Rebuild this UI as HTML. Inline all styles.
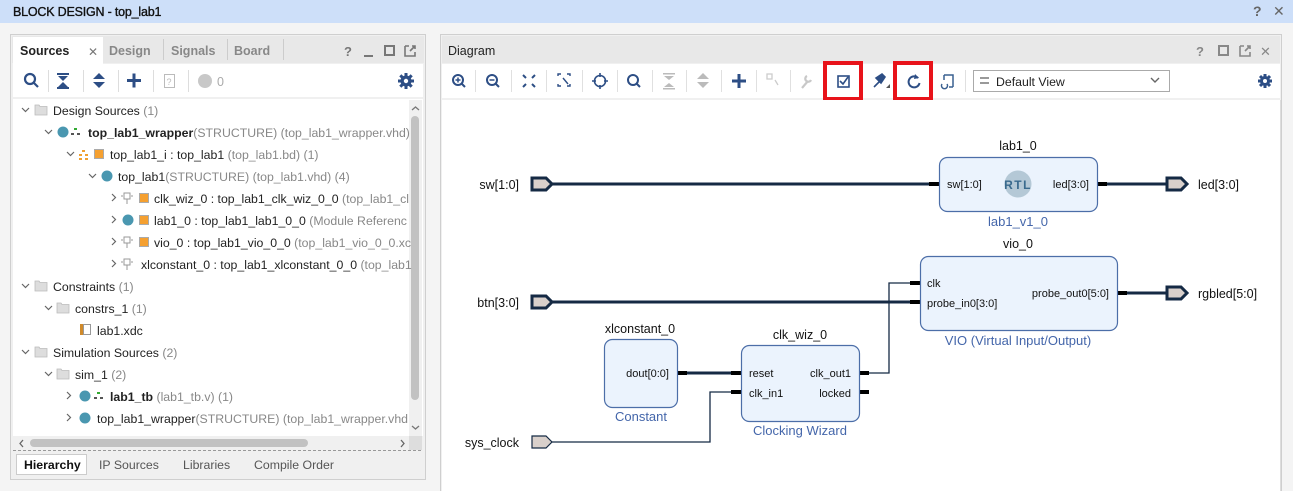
<!DOCTYPE html>
<html><head><meta charset="utf-8"><style>
html,body{margin:0;padding:0;background:#fff;}
svg{display:block;font-family:"Liberation Sans",Arial,sans-serif;}
</style></head><body>
<svg width="1293" height="491" viewBox="0 0 1293 491" xmlns="http://www.w3.org/2000/svg">
<rect x="0" y="0" width="1293" height="491" fill="#f4f4f4"/>
<!-- title bar -->
<rect x="0" y="0" width="1293" height="23" fill="#cddff9"/>
<text x="13" y="16" font-size="12.5" fill="#111" stroke="#111" stroke-width="0.35" letter-spacing="-0.2">BLOCK DESIGN - top_lab1</text>
<text x="1253" y="16" font-size="14" fill="#666" font-weight="bold">?</text>
<text x="1273" y="16" font-size="14" fill="#666">✕</text>

<!-- LEFT PANEL -->
<rect x="10.5" y="34.5" width="415" height="445" fill="#f0f0f0" stroke="#cfcfcf"/>
<rect x="12" y="36" width="412" height="27" fill="#e8e8e8"/>
<rect x="13" y="37" width="90" height="27" fill="#fff"/>
<text x="20" y="55" font-size="12.5" font-weight="bold" fill="#222">Sources</text>
<text x="88" y="56" font-size="12" fill="#777">✕</text>
<text x="109" y="55" font-size="12.5" font-weight="bold" fill="#888">Design</text>
<line x1="163.5" y1="39" x2="163.5" y2="60" stroke="#ccc"/>
<text x="171" y="55" font-size="12.5" font-weight="bold" fill="#888">Signals</text>
<line x1="227.5" y1="39" x2="227.5" y2="60" stroke="#ccc"/>
<text x="234" y="55" font-size="12.5" font-weight="bold" fill="#888">Board</text>
<line x1="283.5" y1="39" x2="283.5" y2="60" stroke="#ccc"/>
<text x="344" y="56" font-size="13" font-weight="bold" fill="#777">?</text>
<line x1="364" y1="56" x2="373" y2="56" stroke="#777" stroke-width="2"/>
<rect x="385" y="46" width="9" height="9" fill="none" stroke="#777" stroke-width="2"/>
<path d="M405 46h4M405 46v10h10v-4M410 51l5-5M412 46h3v3" fill="none" stroke="#777" stroke-width="1.6"/>
<!-- toolbar -->
<rect x="13" y="64" width="410" height="33" fill="#fff"/>
<g stroke="#2d4e85" fill="none" stroke-width="2.2">
<circle cx="30" cy="79" r="5"/><line x1="34" y1="83" x2="38" y2="87"/>
</g>
<g fill="#2d4e85">
<rect x="57" y="73" width="12" height="2"/><path d="M58 76h10l-5 5z"/><path d="M58 87h10l-5-5z"/><rect x="57" y="87" width="12" height="2"/>
<path d="M93 79h12l-6-6z"/><path d="M93 82h12l-6 6z"/>
<rect x="127" y="79" width="14" height="3"/><rect x="132.5" y="73.5" width="3" height="14"/>
<circle cx="205" cy="81" r="7" fill="#c8c8c8"/>
</g>
<line x1="48.5" y1="70" x2="48.5" y2="92" stroke="#ddd"/>
<line x1="83.5" y1="70" x2="83.5" y2="92" stroke="#ddd"/>
<line x1="118.5" y1="70" x2="118.5" y2="92" stroke="#ddd"/>
<line x1="153.5" y1="70" x2="153.5" y2="92" stroke="#ddd"/>
<line x1="188.5" y1="70" x2="188.5" y2="92" stroke="#ddd"/>
<rect x="164.5" y="74.5" width="10" height="13" fill="none" stroke="#bbb"/>
<text x="166.5" y="85" font-size="9" fill="#bbb">?</text>
<text x="217" y="86" font-size="12.5" fill="#aaa">0</text>
<g transform="translate(406,81)" fill="#2d4e85">
<circle r="5.5"/><g stroke="#2d4e85" stroke-width="3"><line x1="0" y1="-8" x2="0" y2="8"/><line x1="-8" y1="0" x2="8" y2="0"/><line x1="-5.7" y1="-5.7" x2="5.7" y2="5.7"/><line x1="-5.7" y1="5.7" x2="5.7" y2="-5.7"/></g><circle r="2.2" fill="#fff"/>
</g>
<!-- tree -->
<rect x="13" y="99" width="410" height="337" fill="#fff"/>
<rect x="409" y="100" width="13" height="336" fill="#f0f0f0"/>
<rect x="411" y="116" width="8" height="284" rx="4" fill="#c2c2c2"/>
<path d="M412 110l3.5-3 3.5 3" fill="none" stroke="#777" stroke-width="1.3"/>
<path d="M412 426l3.5 3 3.5-3" fill="none" stroke="#777" stroke-width="1.3"/>
<g font-size="12.3" fill="#222">
<defs>
<g id="fold"><path d="M0 0h4l1 1.5h7v8.5h-12z" fill="#ddd" stroke="#bbb" stroke-width="0.8"/></g>
</defs>
<g fill="none" stroke="#666" stroke-width="1.2">
<path d="M22 108l3.5 3.5 3.5-3.5"/>
<path d="M45 130l3.5 3.5 3.5-3.5"/>
<path d="M67 152l3.5 3.5 3.5-3.5"/>
<path d="M89 174l3.5 3.5 3.5-3.5"/>
<path d="M112 194l3.5 3.5-3.5 3.5"/>
<path d="M112 216l3.5 3.5-3.5 3.5"/>
<path d="M112 238l3.5 3.5-3.5 3.5"/>
<path d="M112 260l3.5 3.5-3.5 3.5"/>
<path d="M22 284l3.5 3.5 3.5-3.5"/>
<path d="M45 306l3.5 3.5 3.5-3.5"/>
<path d="M22 350l3.5 3.5 3.5-3.5"/>
<path d="M45 372l3.5 3.5 3.5-3.5"/>
<path d="M67 392l3.5 3.5-3.5 3.5"/>
<path d="M67 414l3.5 3.5-3.5 3.5"/>
</g>
<use href="#fold" x="35" y="105"/>
<text x="53" y="115">Design Sources <tspan fill="#888">(1)</tspan></text>
<circle cx="63" cy="132" r="5.5" fill="#4a97b0"/>
<g fill="#555"><rect x="74" y="128" width="3" height="2" fill="#3a3"/><rect x="71" y="133" width="3" height="2"/><rect x="77" y="133" width="3" height="2"/></g>
<text x="88" y="137"><tspan font-weight="bold">top_lab1_wrapper</tspan><tspan fill="#888">(STRUCTURE) (top_lab1_wrapper.vhd)</tspan></text>
<g fill="#f0a030"><rect x="82" y="150" width="3" height="2"/><rect x="79" y="154" width="3" height="2"/><rect x="85" y="154" width="3" height="2"/><rect x="79" y="158" width="3" height="2"/><rect x="85" y="158" width="3" height="2"/></g>
<rect x="94.5" y="149.5" width="9" height="9" fill="#f5a030" stroke="#aaa"/>
<text x="110" y="159">top_lab1_i : top_lab1 <tspan fill="#888">(top_lab1.bd) (1)</tspan></text>
<circle cx="107" cy="176" r="5.5" fill="#4a97b0"/>
<text x="118" y="181">top_lab1<tspan fill="#888">(STRUCTURE) (top_lab1.vhd) (4)</tspan></text>
<path d="M124 193h6v6h-6zM127 199v5M123 196h-2M133 196h-2" fill="none" stroke="#999"/>
<rect x="139.5" y="193.5" width="9" height="9" fill="#f5a030" stroke="#aaa"/>
<text x="154" y="203">clk_wiz_0 : top_lab1_clk_wiz_0_0 <tspan fill="#888">(top_lab1_cl</tspan></text>
<circle cx="128" cy="220" r="5.5" fill="#4a97b0"/>
<rect x="139.5" y="215.5" width="9" height="9" fill="#f5a030" stroke="#aaa"/>
<text x="154" y="225">lab1_0 : top_lab1_lab1_0_0 <tspan fill="#888">(Module Referenc</tspan></text>
<path d="M124 237h6v6h-6zM127 243v5M123 240h-2M133 240h-2" fill="none" stroke="#999"/>
<rect x="139.5" y="237.5" width="9" height="9" fill="#f5a030" stroke="#aaa"/>
<text x="154" y="247">vio_0 : top_lab1_vio_0_0 <tspan fill="#888">(top_lab1_vio_0_0.xc</tspan></text>
<path d="M124 259h6v6h-6zM127 265v5M123 262h-2M133 262h-2" fill="none" stroke="#999"/>
<text x="141" y="269">xlconstant_0 : top_lab1_xlconstant_0_0 <tspan fill="#888">(top_lab1</tspan></text>
<use href="#fold" x="35" y="281"/>
<text x="53" y="291">Constraints <tspan fill="#888">(1)</tspan></text>
<use href="#fold" x="57" y="303"/>
<text x="75" y="313">constrs_1 <tspan fill="#888">(1)</tspan></text>
<rect x="80" y="324" width="3" height="11" fill="#d08a2a"/><rect x="83.5" y="324.5" width="7" height="10" fill="none" stroke="#999"/>
<text x="97" y="335">lab1.xdc</text>
<use href="#fold" x="35" y="347"/>
<text x="53" y="357">Simulation Sources <tspan fill="#888">(2)</tspan></text>
<use href="#fold" x="57" y="369"/>
<text x="75" y="379">sim_1 <tspan fill="#888">(2)</tspan></text>
<circle cx="85" cy="396" r="5.5" fill="#4a97b0"/>
<g fill="#555"><rect x="97" y="392" width="3" height="2" fill="#3a3"/><rect x="94" y="397" width="3" height="2"/><rect x="100" y="397" width="3" height="2"/></g>
<text x="110" y="401"><tspan font-weight="bold">lab1_tb</tspan><tspan fill="#888"> (lab1_tb.v) (1)</tspan></text>
<circle cx="85" cy="418" r="5.5" fill="#4a97b0"/>
<text x="97" y="423">top_lab1_wrapper<tspan fill="#888">(STRUCTURE) (top_lab1_wrapper.vhd</tspan></text>
</g>
<!-- h scroll -->
<rect x="13" y="436" width="410" height="14" fill="#f0f0f0"/>
<rect x="30" y="439" width="278" height="8" rx="4" fill="#c2c2c2"/>
<path d="M23 440l-3 3.5 3 3.5M401 440l3 3.5-3 3.5" fill="none" stroke="#666" stroke-width="1.3"/>
<rect x="409" y="436" width="13" height="14" fill="#ddd"/>
<line x1="13" y1="450.5" x2="423" y2="450.5" stroke="#999" stroke-dasharray="3,2"/>
<rect x="16.5" y="454.5" width="70" height="20" fill="#fff" stroke="#ccc"/>
<text x="24" y="469" font-size="12.3" font-weight="bold" fill="#111">Hierarchy</text>
<text x="99" y="469" font-size="12.3" fill="#555">IP Sources</text>
<text x="183" y="469" font-size="12.3" fill="#555">Libraries</text>
<text x="254" y="469" font-size="12.3" fill="#555">Compile Order</text>

<!-- RIGHT PANEL -->
<rect x="440.5" y="34.5" width="841" height="460" fill="#f0f0f0" stroke="#cfcfcf"/>
<rect x="442" y="36" width="838" height="27" fill="#e8e8e8"/>
<text x="448" y="55" font-size="12.5" fill="#222">Diagram</text>
<text x="1196" y="56" font-size="13" font-weight="bold" fill="#888">?</text>
<rect x="1219" y="46" width="9" height="9" fill="none" stroke="#888" stroke-width="2"/>
<path d="M1240 46h4M1240 46v10h10v-4M1245 51l5-5M1247 46h3v3" fill="none" stroke="#888" stroke-width="1.6"/>
<text x="1260" y="56" font-size="13" fill="#888">✕</text>
<rect x="442" y="64" width="838" height="34" fill="#fff"/>
<g stroke="#2d4e85" fill="none" stroke-width="2">
<circle cx="458" cy="80" r="5"/><line x1="462" y1="84" x2="465" y2="87"/><path d="M455.5 80h5M458 77.5v5" stroke-width="1.5"/>
<circle cx="492" cy="80" r="5"/><line x1="496" y1="84" x2="499" y2="87"/><path d="M489.5 80h5" stroke-width="1.5"/>
<path d="M523 75l3 3M535 75l-3 3M523 87l3-3M535 87l-3-3" stroke-width="2"/>
<path d="M558 76v-2h3M570 76v-2h-3M558 84v2h3M570 84v2h-3" stroke-width="1.4"/><path d="M563 78l5 6" stroke-width="1.4"/>
<circle cx="600" cy="81" r="5.5" stroke-width="1.6"/><path d="M600 73v4M600 85v4M592 81h4M604 81h4" stroke-width="1.6"/>
<circle cx="633" cy="80" r="5"/><line x1="637" y1="84" x2="640" y2="87"/>
</g>
<g fill="#bbb">
<rect x="663" y="73" width="12" height="1.5"/><path d="M664 76h10l-5 4z"/><path d="M664 87h10l-5-4z"/><rect x="663" y="88" width="12" height="1.5"/>
<path d="M697 79h12l-6-6z"/><path d="M697 82h12l-6 6z"/>
</g>
<rect x="732" y="79.5" width="14" height="3" fill="#2d4e85"/><rect x="737.5" y="74" width="3" height="14" fill="#2d4e85"/>
<path d="M767 74h5v5h-5z M775 80l3 5" fill="none" stroke="#ccc" stroke-width="1.3"/>
<path d="M802 88l6-7M807 76a3 3 0 1 0 4 4" fill="none" stroke="#c8c8c8" stroke-width="2.2"/>
<g fill="none" stroke="#2d4e85" stroke-width="1.6"><rect x="838" y="76" width="11" height="11"/><path d="M840 81l3 3 5-7"/></g>
<path d="M874 87l5-5M876 78l6-4 3 3-4 6z" fill="#2d4e85" stroke="#2d4e85" stroke-width="1.6"/><path d="M886 88h4v-4z" fill="#555"/>
<path d="M918 78a5.5 5.5 0 1 0 1.5 5" fill="none" stroke="#2d4e85" stroke-width="2"/><path d="M915 74l4 4-5 1z" fill="#2d4e85"/>
<path d="M944 75h9v12M944 80v-5M942 84a3 3 0 1 0 5 0M949 87h4" fill="none" stroke="#3a6090" stroke-width="1.5"/>
<g stroke="#e0e0e0"><line x1="475.5" y1="70" x2="475.5" y2="92"/><line x1="511.5" y1="70" x2="511.5" y2="92"/><line x1="546.5" y1="70" x2="546.5" y2="92"/><line x1="582.5" y1="70" x2="582.5" y2="92"/><line x1="617.5" y1="70" x2="617.5" y2="92"/><line x1="652.5" y1="70" x2="652.5" y2="92"/><line x1="686.5" y1="70" x2="686.5" y2="92"/><line x1="721.5" y1="70" x2="721.5" y2="92"/><line x1="756.5" y1="70" x2="756.5" y2="92"/><line x1="790.5" y1="70" x2="790.5" y2="92"/><line x1="965.5" y1="70" x2="965.5" y2="92"/></g>
<rect x="825" y="63" width="36" height="36" fill="none" stroke="#e8131a" stroke-width="4"/>
<rect x="895" y="63" width="36" height="36" fill="none" stroke="#e8131a" stroke-width="4"/>
<rect x="973.5" y="70.5" width="196" height="21" fill="#fff" stroke="#aaa"/>
<rect x="980" y="77" width="9" height="2" fill="#999"/><rect x="980" y="82" width="9" height="2" fill="#999"/>
<text x="996" y="86" font-size="12.3" fill="#222">Default View</text>
<path d="M1151 78l4 4 4-4" fill="none" stroke="#666" stroke-width="1.4"/>
<g transform="translate(1265,81)" fill="#2d4e85">
<circle r="5"/><g stroke="#2d4e85" stroke-width="3"><line x1="0" y1="-7" x2="0" y2="7"/><line x1="-7" y1="0" x2="7" y2="0"/><line x1="-5" y1="-5" x2="5" y2="5"/><line x1="-5" y1="5" x2="5" y2="-5"/></g><circle r="2" fill="#fff"/>
</g>
<!-- canvas -->
<rect x="442" y="100" width="838" height="391" fill="#fff"/>
<rect x="1280" y="100" width="1" height="391" fill="#ddd"/>

<g font-size="12.5" fill="#111">
<g stroke="#152a44" stroke-width="3" fill="none">
<line x1="552" y1="184" x2="931" y2="184"/>
<line x1="1106" y1="184" x2="1167" y2="184"/>
<line x1="552" y1="302" x2="912" y2="302"/>
<line x1="1126" y1="293" x2="1167" y2="293"/>
<line x1="686" y1="373" x2="732" y2="373"/>
</g>
<g stroke="#152a44" stroke-width="1.3" fill="none">
<path d="M868 373H889V283H912"/>
<path d="M552 442H710V392H732"/>
</g>
<g fill="#000">
<rect x="929" y="182" width="10" height="4"/><rect x="1097" y="182" width="10" height="4"/>
<rect x="910" y="300" width="10" height="4"/><rect x="910" y="281" width="10" height="4"/>
<rect x="1117" y="291" width="10" height="4"/>
<rect x="677" y="371" width="10" height="4"/>
<rect x="731" y="371" width="10" height="4"/><rect x="731" y="390" width="10" height="4"/>
<rect x="859" y="371" width="10" height="4"/><rect x="859" y="390" width="10" height="4"/>
</g>
<g fill="#d9d0cb" stroke="#152a44" stroke-width="3">
<path d="M532 178h14l6 6-6 6h-14z"/>
<path d="M532 296h14l6 6-6 6h-14z"/>
<path d="M1167 178h14l6 6-6 6h-14z"/>
<path d="M1167 287h14l6 6-6 6h-14z"/>
</g>
<path d="M532 436h14l6 6-6 6h-14z" fill="#d9d0cb" stroke="#152a44" stroke-width="1.2"/>
<text x="519" y="189" text-anchor="end">sw[1:0]</text>
<text x="519" y="307" text-anchor="end">btn[3:0]</text>
<text x="519" y="447" text-anchor="end">sys_clock</text>
<text x="1198" y="189">led[3:0]</text>
<text x="1198" y="298">rgbled[5:0]</text>
<g fill="#ebf3fd" stroke="#4c6ea8" stroke-width="1.2">
<rect x="939.5" y="157.5" width="158" height="54" rx="8"/>
<rect x="920.5" y="256.5" width="197" height="74" rx="8"/>
<rect x="604.5" y="339.5" width="73" height="68" rx="8"/>
<rect x="741.5" y="345.5" width="118" height="76" rx="8"/>
</g>
<text x="1018" y="150" text-anchor="middle">lab1_0</text>
<text x="1018" y="248" text-anchor="middle">vio_0</text>
<text x="640" y="333" text-anchor="middle">xlconstant_0</text>
<text x="800" y="339" text-anchor="middle">clk_wiz_0</text>
<g font-size="11">
<text x="947" y="188">sw[1:0]</text>
<text x="1089" y="188" text-anchor="end">led[3:0]</text>
<text x="927" y="287">clk</text>
<text x="927" y="307">probe_in0[3:0]</text>
<text x="1109" y="297" text-anchor="end">probe_out0[5:0]</text>
<text x="669" y="377" text-anchor="end">dout[0:0]</text>
<text x="749" y="377">reset</text>
<text x="749" y="397">clk_in1</text>
<text x="851" y="377" text-anchor="end">clk_out1</text>
<text x="851" y="397" text-anchor="end">locked</text>
</g>
<circle cx="1018" cy="184" r="13.5" fill="#b4c8d6"/>
<text x="1018" y="189" text-anchor="middle" font-size="12" font-weight="bold" fill="#3a6a8e" letter-spacing="1.5">RTL</text>
<g fill="#4466aa" font-size="13">
<text x="1018" y="226" text-anchor="middle">lab1_v1_0</text>
<text x="1018" y="345" text-anchor="middle">VIO (Virtual Input/Output)</text>
<text x="641" y="421" text-anchor="middle">Constant</text>
<text x="800" y="435" text-anchor="middle">Clocking Wizard</text>
</g>
</g>
</svg>
</body></html>
